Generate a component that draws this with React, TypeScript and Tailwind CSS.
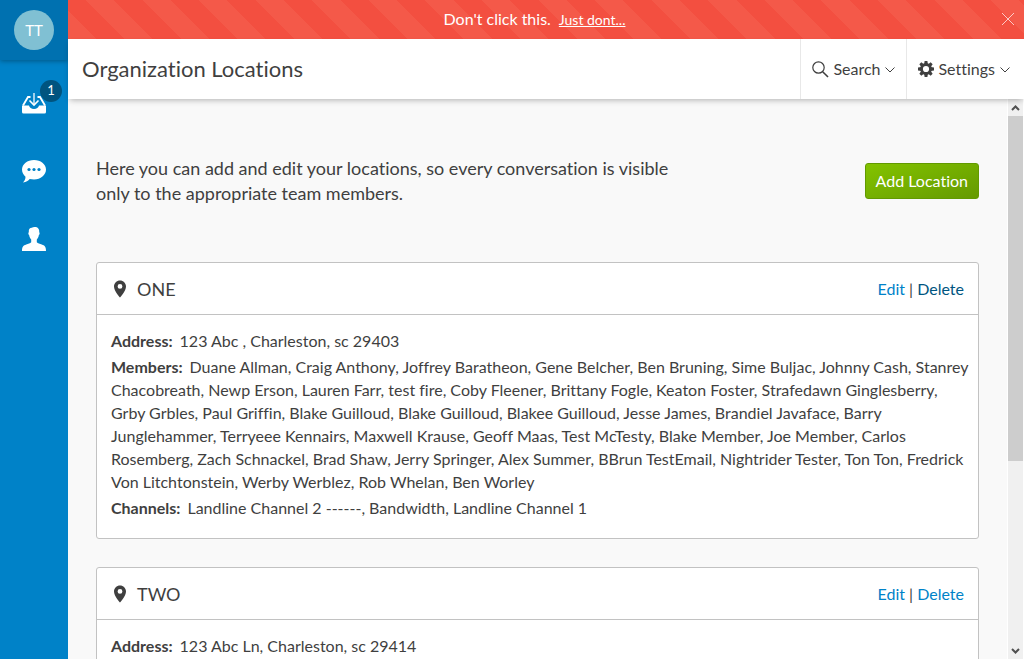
import type { ReactNode } from "react";

type Location = {
  name: string;
  address: string;
  members: string;
  channels: string;
  deleteClass: string;
};

const locations: Location[] = [
  {
    name: "ONE",
    address: "123 Abc , Charleston, sc 29403",
    members:
      "Duane Allman, Craig Anthony, Joffrey Baratheon, Gene Belcher, Ben Bruning, Sime Buljac, Johnny Cash, Stanrey Chacobreath, Newp Erson, Lauren Farr, test fire, Coby Fleener, Brittany Fogle, Keaton Foster, Strafedawn Ginglesberry, Grby Grbles, Paul Griffin, Blake Guilloud, Blake Guilloud, Blakee Guilloud, Jesse James, Brandiel Javaface, Barry Junglehammer, Terryeee Kennairs, Maxwell Krause, Geoff Maas, Test McTesty, Blake Member, Joe Member, Carlos Rosemberg, Zach Schnackel, Brad Shaw, Jerry Springer, Alex Summer, BBrun TestEmail, Nightrider Tester, Ton Ton, Fredrick Von Litchtonstein, Werby Werblez, Rob Whelan, Ben Worley",
    channels: "Landline Channel 2 ------, Bandwidth, Landline Channel 1",
    deleteClass: "text-[#005580]",
  },
  {
    name: "TWO",
    address: "123 Abc Ln, Charleston, sc 29414",
    members: "",
    channels: "",
    deleteClass: "text-[#0082c8]",
  },
];

function InboxIcon() {
  return (
    <svg width="24" height="22" viewBox="0 0 24 22" aria-hidden="true">
      <path d="M0 13.500h7c.6 2.200 2.300 3.500 5 3.500s4.400-1.300 5-3.500h7V20a1.500 1.500 0 0 1-1.500 1.500h-21A1.500 1.500 0 0 1 0 20z" fill="#fff" />
      <path d="M8.500 5H6L1 13.500M15.500 5H18L23 13.500" fill="none" stroke="#fff" strokeWidth="1.800" />
      <path d="M12 1v11" fill="none" stroke="#b3daef" strokeWidth="1.800" />
      <path d="M7.500 8.500l4.500 4.500 4.500-4.500" fill="none" stroke="#fff" strokeWidth="1.600" />
    </svg>
  );
}

function ChatIcon() {
  return (
    <svg width="24" height="23" viewBox="0 0 24 23" aria-hidden="true">
      <path d="M12 0C5.400 0 0 4.200 0 9.600c0 3 1.500 5.500 3.500 7.100C3.500 19 2.500 21 1 22.500c3.200-.2 5.300-1.700 6.700-3.400 1.400.3 2.800.4 4.300.4 6.600 0 12-4.400 12-9.900S18.600 0 12 0z" fill="#fff" />
      <g fill="#0082c8">
        <circle cx="7" cy="9.500" r="1.600" />
        <circle cx="12" cy="9.500" r="1.600" />
        <circle cx="17" cy="9.500" r="1.600" />
      </g>
    </svg>
  );
}

function PersonIcon() {
  return (
    <svg width="24" height="24" viewBox="0 0 24 24" aria-hidden="true">
      <path d="M12.500 0c3.500 0 5 2 4.700 5.200.7.300.6 2.300-.4 3-.3 2-1.200 3.500-2 4.300v2.700c1 1.200 3 1.600 5 2.300 2.800 1 4.200 2.200 4.200 6.500H0c0-4.300 1.400-5.500 4.200-6.500 2-.7 4-1.100 5-2.300v-2.700c-.8-.8-1.700-2.300-2-4.300-1-.7-1.100-2.700-.4-3C6.500 2 8 .8 9.800.8c.7-.6 1.700-.8 2.700-.8z" fill="#fff" />
    </svg>
  );
}

function SearchIcon() {
  return (
    <svg width="17" height="17" viewBox="0 0 17 17" fill="none" stroke="#3f3f3f" aria-hidden="true">
      <circle cx="6.500" cy="6.500" r="5.700" strokeWidth="1.200" />
      <path d="M10.700 10.700L16 16" strokeWidth="1.600" />
    </svg>
  );
}

function GearIcon() {
  return (
    <svg width="16" height="16" viewBox="-8 -8 16 16" aria-hidden="true">
      <g fill="#3f3f3f">
        {[0, 45, 90, 135].map((angle) => (
          <path key={angle} transform={`rotate(${angle})`} d="M-1.400-8h2.800l.5 3.500h-3.800zM-1.400 8h2.800l.5-3.500h-3.800z" />
        ))}
      </g>
      <circle r="4.500" fill="none" stroke="#3f3f3f" strokeWidth="2.800" />
    </svg>
  );
}

function Chevron() {
  return (
    <svg className="mt-0.5 ml-px" width="10" height="6" viewBox="0 0 10 6" fill="none" stroke="#3f3f3f" aria-hidden="true">
      <path d="M.5 .5L5 5L9.500 .5" />
    </svg>
  );
}

function PinIcon() {
  return (
    <svg width="12" height="18" viewBox="5 2 14 20" aria-hidden="true">
      <path d="M12 2C8.130 2 5 5.130 5 9c0 5.250 7 13 7 13s7-7.750 7-13c0-3.870-3.130-7-7-7zm0 9.800a2.800 2.800 0 1 1 0-5.600 2.800 2.800 0 0 1 0 5.600z" fill="#3f3f3f" />
    </svg>
  );
}

function Detail({ label, children }: { label: string; children: ReactNode }) {
  return (
    <p>
      <strong className="mr-[7px] font-bold">{label}:</strong>
      {children}
    </p>
  );
}

function LocationCard({ location }: { location: Location }) {
  return (
    <article className="rounded-[3px] border border-[#c2c2c2] bg-white">
      <header className="flex h-13 items-center border-b border-[#c2c2c2] pr-3.5 pl-[17px]">
        <PinIcon />
        <h2 className="ml-[11px] flex-1 text-lg">{location.name}</h2>
        <div>
          <a href="#edit" className="text-[#0082c8]">Edit</a>
          {" | "}
          <a href="#delete" className={location.deleteClass}>Delete</a>
        </div>
      </header>
      <div className="flex flex-col gap-[3px] pt-3.5 pr-1.5 pb-[19px] pl-3.5 leading-[23px]">
        <Detail label="Address">{location.address}</Detail>
        {location.members && <Detail label="Members">{location.members}</Detail>}
        {location.channels && <Detail label="Channels">{location.channels}</Detail>}
      </div>
    </article>
  );
}

export default function App() {
  return (
    <div className="flex h-screen overflow-hidden bg-[#f9f9f9] font-['Lato',sans-serif] text-base text-[#3f3f3f] [font-variant-ligatures:no-common-ligatures] [text-rendering:optimizeLegibility]">
      <aside className="flex w-17 shrink-0 flex-col bg-[#0082c8]">
        <div className="flex h-15 items-center justify-center bg-[#0071b0] shadow-[0_1px_5px_rgba(0,0,0,0.35)]">
          <button aria-label="Account" className="size-10 rounded-full bg-[#80c0d3] text-[15px] text-white">TT</button>
        </div>
        <nav className="flex flex-col pt-px">
          <a href="#inbox" aria-label="Inbox" className="flex h-17 items-center justify-center pt-4">
            <span className="relative">
              <InboxIcon />
              <span className="absolute -top-3 left-[18px] flex size-[22px] items-center justify-center rounded-full bg-[#00547f] text-[13px] text-white">1</span>
            </span>
          </a>
          <a href="#messages" aria-label="Messages" className="flex h-17 items-center justify-center pt-4">
            <ChatIcon />
          </a>
          <a href="#contacts" aria-label="Contacts" className="flex h-17 items-center justify-center pt-4">
            <PersonIcon />
          </a>
        </nav>
      </aside>

      <div className="flex min-w-0 flex-1 flex-col">
        <div className="flex h-[39px] shrink-0 items-center bg-[repeating-linear-gradient(45deg,#f45949_0px,#f45949_20px,#f34f40_20px,#f34f40_40px)] pr-[9px] pb-0.5 text-white">
          <p className="flex flex-1 items-baseline justify-center gap-2">
            <span>Don't click this.</span>
            <a href="#dont" className="text-sm underline">Just dont...</a>
          </p>
          <button aria-label="Dismiss">
            <svg width="14" height="14" viewBox="0 0 14 14" stroke="#fff" strokeOpacity="0.700" aria-hidden="true">
              <path d="M1 1l12 12M13 1L1 13" />
            </svg>
          </button>
        </div>

        <header className="z-10 flex h-15 shrink-0 items-center bg-white pl-3.5 shadow-[0_3px_6px_-2px_rgba(0,0,0,0.3)]">
          <h1 className="flex-1 pb-0.5 text-[22px]">Organization Locations</h1>
          <button className="flex h-full items-center gap-1 border-l border-[#e8e8e8] px-[11px]">
            <SearchIcon />
            <span>Search</span>
            <Chevron />
          </button>
          <button className="flex h-full items-center gap-1 border-l border-[#e8e8e8] pr-3.5 pl-[11px]">
            <GearIcon />
            <span>Settings</span>
            <Chevron />
          </button>
        </header>

        <div className="flex min-h-0 flex-1">
          <main className="min-w-0 flex-1 overflow-hidden px-7 pt-14">
            <div className="flex items-center justify-between pt-px">
              <p className="max-w-[580px] text-lg leading-[25px]">
                Here you can add and edit your locations, so every conversation is visible only to the appropriate team members.
              </p>
              <button className="h-9 shrink-0 rounded-[3px] border border-[#629a00] bg-linear-160 from-[#83c300] to-[#659a00] px-2.5 text-white">
                Add Location
              </button>
            </div>
            <div className="mt-14 flex flex-col gap-7">
              {locations.map((location) => (
                <LocationCard key={location.name} location={location} />
              ))}
            </div>
          </main>

          <div className="flex w-[17px] shrink-0 flex-col items-center border-x border-white bg-[#f0f0f0]" aria-hidden="true">
            <div className="flex h-[17px] items-center">
              <svg width="9" height="6" viewBox="0 0 9 6" fill="none" stroke="#505050" strokeWidth="2">
                <path d="M1 5l3.500-3.500L8 5" />
              </svg>
            </div>
            <div className="h-[345px] w-full bg-[#cdcdcd]" />
            <div className="flex-1" />
            <div className="flex h-[17px] items-center">
              <svg width="9" height="6" viewBox="0 0 9 6" fill="none" stroke="#505050" strokeWidth="2">
                <path d="M1 1l3.500 3.500L8 1" />
              </svg>
            </div>
          </div>
        </div>
      </div>
    </div>
  );
}
